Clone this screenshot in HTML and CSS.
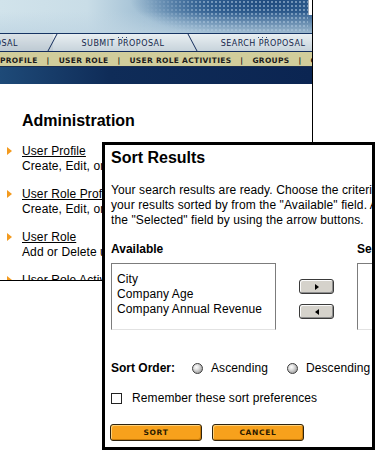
FILE: index.html
```html
<!DOCTYPE html>
<html lang="en">
<head>
<meta charset="utf-8">
<title>Administration - Sort Results</title>
<link rel="stylesheet" href="styles.css">
</head>
<body>
<div class="page">
  <header class="banner">
    <div class="banner-dots"></div>
    <div class="banner-tab"></div>
  </header>
  <nav class="tabs">
    <div class="tab tab-first">EDIT PROPOSAL</div>
    <div class="tab tab-submit">SUBMIT PROPOSAL</div>
    <div class="tab tab-search">SEARCH PROPOSAL</div>
  </nav>
  <nav class="subnav">
    <span>PROFILE</span><span>|</span><span>USER ROLE</span><span>|</span><span>USER ROLE ACTIVITIES</span><span>|</span><span>GROUPS</span><span>|</span><span>CONTACTS</span>
  </nav>
  <div class="strip"></div>
  <main class="admin">
    <h1 class="admin-title">Administration</h1>
    <ul class="admin-list">
      <li class="admin-item"><div><a href="#" class="admin-link">User Profile</a><div>Create, Edit, or Delete user profiles.</div></div></li>
      <li class="admin-item"><div><a href="#" class="admin-link">User Role Profile</a><div>Create, Edit, or Delete user role profiles.</div></div></li>
      <li class="admin-item"><div><a href="#" class="admin-link">User Role</a><div>Add or Delete user roles.</div></div></li>
      <li class="admin-item"><div><a href="#" class="admin-link">User Role Activities</a><div>Assign activities to user roles.</div></div></li>
    </ul>
  </main>
</div>

<section class="dialog">
  <div class="dialog-body">
    <h2 class="dialog-title">Sort Results</h2>
    <p class="intro">Your search results are ready. Choose the criteria you want<br>your results sorted by from the "Available" field. Add them to<br>the "Selected" field by using the arrow buttons.</p>
    <div class="lists">
      <div class="list-label">Available</div>
      <div></div>
      <div class="list-label">Selected</div>
      <ul class="listbox">
        <li>City</li>
        <li>Company Age</li>
        <li>Company Annual Revenue</li>
      </ul>
      <div class="arrows">
        <button class="arrow-btn" type="button"><span class="tri tri-right"></span></button>
        <button class="arrow-btn" type="button"><span class="tri tri-left"></span></button>
      </div>
      <ul class="listbox"></ul>
    </div>
    <div class="sort-order">
      <span class="sort-label">Sort Order:</span>
      <span class="radio radio-first"></span><span class="radio-text">Ascending</span>
      <span class="radio radio-second"></span><span class="radio-text">Descending</span>
    </div>
    <div class="remember">
      <span class="checkbox"></span><span class="remember-text">Remember these sort preferences</span>
    </div>
    <div class="actions">
      <button class="btn btn-sort" type="button">SORT</button>
      <button class="btn" type="button">CANCEL</button>
    </div>
  </div>
</section>
</body>
</html>
```

FILE: styles.css
```css
html, body {
  margin: 0;
  padding: 0;
  background: #fff;
}
body {
  font-family: "Liberation Sans", Arial, sans-serif;
  color: #000;
  width: 375px;
  height: 450px;
  overflow: hidden;
}

/* ---------- background page ---------- */
.page {
  width: 312px;
  height: 280px;
  border-right: 1px solid #000;
  border-bottom: 1px solid #000;
  overflow: hidden;
}

.banner {
  height: 33px;
  border-bottom: 1px solid #163463;
  display: flex;
  justify-content: flex-end;
  background:
    linear-gradient(to bottom, rgba(205,224,234,0) 35%, rgba(190,212,226,0.75) 100%),
    radial-gradient(ellipse 140px 40px at 270px 0px, #1f4b7e 0%, #2f5d8f 45%, rgba(60,100,145,0) 100%),
    linear-gradient(to right, #d1e3eb 0%, #c9dde7 28%, #9dbcd2 48%, #5f8bb3 68%, #3b6a98 86%, #33628f 100%);
}
.banner-dots {
  width: 170px;
  height: 100%;
  background-image: radial-gradient(circle, rgba(175,200,222,0.55) 0.8px, rgba(175,200,222,0) 1.3px);
  background-size: 4px 4px;
  -webkit-mask-image: linear-gradient(to right, rgba(0,0,0,0), #000 40%);
  mask-image: linear-gradient(to right, rgba(0,0,0,0), #000 40%);
}
.banner-tab {
  width: 3px;
  height: 15px;
  background: #fff;
  border-left: 1px solid #9aa8b8;
}

.tabs {
  height: 17px;
  display: flex;
  background: linear-gradient(#e9eff2, #c7d3db);
  border-bottom: 1px solid #142d5c;
  font-family: "DejaVu Sans", sans-serif;
  font-size: 8px;
  letter-spacing: 0.45px;
  color: #14264a;
  white-space: nowrap;
}
.tab {
  flex: 0 0 140px;
  position: relative;
  box-sizing: border-box;
  padding-top: 2px;
  line-height: 15px;
  text-align: center;
}
.tab-first {
  margin-left: -87px;
  background: rgba(120,140,160,0.12);
}
.tab-submit::before,
.tab-search::before {
  content: "";
  position: absolute;
  left: -1px;
  top: 0;
  bottom: 0;
  border-left: 1px solid #142d5c;
}
.tab-submit::before { transform: skewX(-28deg); }
.tab-search::before { transform: skewX(28deg); }
.tab-submit::after,
.tab-search::after {
  content: "";
  position: absolute;
  top: 3px;
  left: 65px;
  width: 1px;
  height: 1px;
  background: #2c4a78;
  box-shadow: 4px 0 0 #2c4a78, 8px 0 0 #2c4a78;
}

.subnav {
  height: 15px;
  box-sizing: border-box;
  padding-top: 3px;
  line-height: 12px;
  display: flex;
  gap: 9px;
  background: #d1cd9b;
  border-bottom: 1px solid #1c2e50;
  font-family: "DejaVu Sans", sans-serif;
  font-weight: bold;
  font-size: 7.5px;
  letter-spacing: 0.3px;
  color: #1c1c1c;
  white-space: nowrap;
}

.strip {
  height: 17px;
  background: linear-gradient(to right, #1e4a78, #0f2c58 35%, #0b2552 100%);
}

.admin {
  padding-top: 28px;
}
.admin-title {
  margin: 0 0 0 22px;
  font-size: 16px;
  line-height: 18px;
  font-weight: bold;
}
.admin-list {
  list-style: none;
  margin: 13.5px 0 0;
  padding: 0;
  display: flex;
  flex-direction: column;
  gap: 13px;
  font-size: 12px;
  line-height: 15px;
  letter-spacing: 0.1px;
  white-space: nowrap;
}
.admin-item {
  display: flex;
}
.admin-item::before {
  content: "";
  flex: none;
  width: 0;
  height: 0;
  border-left: 5px solid #f39a1e;
  border-top: 4.5px solid transparent;
  border-bottom: 4.5px solid transparent;
  margin: 3px 10px 0 7px;
}
.admin-link {
  color: #000;
  text-decoration: underline;
}

/* ---------- dialog ---------- */
.dialog {
  position: absolute;
  left: 102px;
  top: 142px;
  width: 267px;
  height: 302px;
  border: 3px solid #000;
  background: #fff;
  overflow: hidden;
}
.dialog-body {
  width: 340px;
  padding: 4px 0 0 6px;
  font-size: 12px;
  line-height: 15px;
  letter-spacing: 0.1px;
  white-space: nowrap;
}
.dialog-title {
  margin: 0;
  font-size: 16px;
  line-height: 18px;
  font-weight: bold;
  letter-spacing: 0;
}
.intro {
  margin: 15.5px 0 0;
}

.lists {
  margin-top: 14.5px;
  display: grid;
  grid-template-columns: 165px 81px 165px;
  row-gap: 6px;
}
.list-label {
  font-weight: bold;
  letter-spacing: 0;
}
.listbox {
  margin: 0;
  list-style: none;
  height: 67px;
  box-sizing: border-box;
  border: 1px solid #7c7c7c;
  border-bottom-color: #e2e2e2;
  padding: 7.5px 5px 0;
}
.arrows {
  display: flex;
  flex-direction: column;
  align-items: center;
  gap: 10px;
  padding-top: 16px;
}
.arrow-btn {
  width: 35px;
  height: 15px;
  box-sizing: border-box;
  padding: 0;
  border: 1px solid #3a3a3a;
  border-radius: 3px;
  background: #d5d2cb;
  box-shadow: inset 1px 1px 0 #fbfbfb, inset -1px -1px 0 #8e8e8e;
  display: flex;
  align-items: center;
  justify-content: center;
}
.tri {
  width: 0;
  height: 0;
  border-top: 3.5px solid transparent;
  border-bottom: 3.5px solid transparent;
}
.tri-right { border-left: 4px solid #000; }
.tri-left { border-right: 4px solid #000; }

.sort-order {
  margin-top: 30.5px;
  display: flex;
  align-items: center;
}
.sort-label {
  font-weight: bold;
  letter-spacing: 0;
}
.radio {
  width: 11px;
  height: 11px;
  box-sizing: border-box;
  border-radius: 50%;
  border: 1px solid #3d3d3d;
  background: radial-gradient(circle at 38% 35%, #ffffff 0%, #e2e2e2 30%, #a6a6a6 75%, #7c7c7c 100%);
}
.radio-first { margin-left: 17px; }
.radio-second { margin-left: 19px; }
.radio-text { margin-left: 8px; }

.remember {
  margin-top: 15.5px;
  display: flex;
  align-items: center;
}
.checkbox {
  width: 11px;
  height: 11px;
  box-sizing: border-box;
  border: 1px solid #222;
  background: #fff;
}
.remember-text {
  margin-left: 10px;
}

.actions {
  margin-top: 18px;
  margin-left: -1px;
  display: flex;
  gap: 10px;
}
.btn {
  width: 92px;
  height: 17px;
  box-sizing: border-box;
  padding: 0;
  border: 1px solid #2e2410;
  border-radius: 3px;
  background: #f7a11c;
  box-shadow: inset 1px 1px 0 #fdd17a, inset -1px -1px 0 #c97b08;
  font-family: "DejaVu Sans", sans-serif;
  font-weight: bold;
  font-size: 7.5px;
  letter-spacing: 0.7px;
  color: #2a1a00;
  line-height: 15px;
}
```
